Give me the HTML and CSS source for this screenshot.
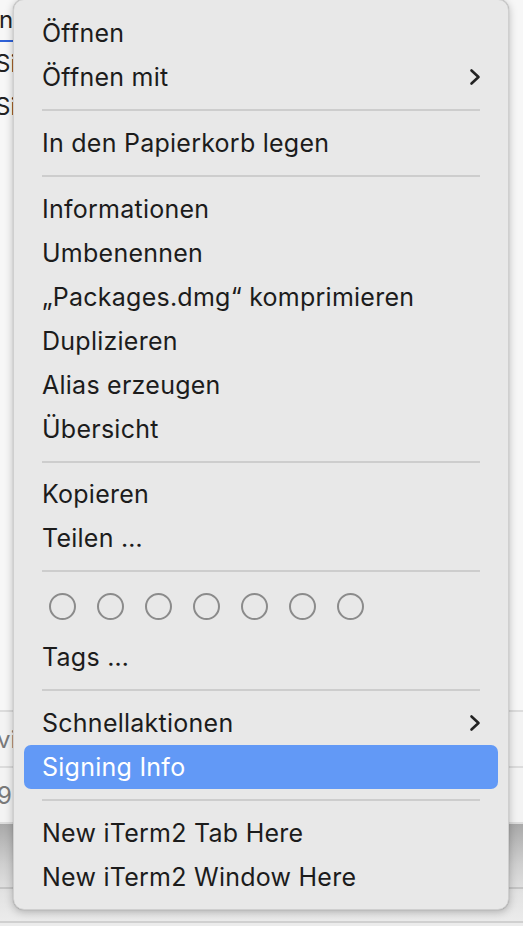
FILE: index.html
```html
<!DOCTYPE html>
<html lang="de">
<head>
<meta charset="utf-8">
<title>Kontextmenü</title>
<link rel="stylesheet" href="styles.css">
</head>
<body>
<div class="finder">
  <div class="frow first"><span class="ftext sel">n</span></div>
  <div class="frow plain"><span class="ftext">Si</span></div>
  <div class="frow plain"><span class="ftext">Si</span></div>
  <div class="fspacer"></div>
  <div class="frow lined"><span class="ftext gray">vi</span></div>
  <div class="frow lined"><span class="ftext gray">9</span></div>
  <div class="fgray">
    <div class="gline one"></div>
    <div class="gline two"></div>
  </div>
</div>

<div class="menu">
  <div class="item">Öffnen</div>
  <div class="item sub">Öffnen mit<svg class="chev" viewBox="0 0 12 18"><path d="M2.5 2.5 L9.5 9 L2.5 15.5" /></svg></div>
  <div class="sep"></div>
  <div class="item">In den Papierkorb legen</div>
  <div class="sep"></div>
  <div class="item">Informationen</div>
  <div class="item">Umbenennen</div>
  <div class="item">„Packages.dmg“ komprimieren</div>
  <div class="item">Duplizieren</div>
  <div class="item">Alias erzeugen</div>
  <div class="item">Übersicht</div>
  <div class="sep"></div>
  <div class="item">Kopieren</div>
  <div class="item">Teilen …</div>
  <div class="sep"></div>
  <div class="tags">
    <span class="dot"></span><span class="dot"></span><span class="dot"></span><span class="dot"></span><span class="dot"></span><span class="dot"></span><span class="dot"></span>
  </div>
  <div class="item">Tags …</div>
  <div class="sep"></div>
  <div class="item sub">Schnellaktionen<svg class="chev" viewBox="0 0 12 18"><path d="M2.5 2.5 L9.5 9 L2.5 15.5" /></svg></div>
  <div class="item active">Signing Info</div>
  <div class="sep"></div>
  <div class="item">New iTerm2 Tab Here</div>
  <div class="item">New iTerm2 Window Here</div>
</div>
</body>
</html>
```

FILE: styles.css
```css
html, body {
  margin: 0;
  padding: 0;
  width: 523px;
  height: 926px;
  overflow: hidden;
  font-family: Inter, "Noto Sans", "Liberation Sans", sans-serif;
}

body {
  position: relative;
  background: #f6f6f6;
}

.finder {
  display: flex;
  flex-direction: column;
  height: 926px;
  background: #f7f7f7;
}

.frow {
  display: flex;
  align-items: center;
  box-sizing: border-box;
}

.ftext {
  font-size: 24px;
  color: #222;
  margin-left: -5px;
}

.ftext.gray {
  color: #7a7a7a;
  margin-left: -3px;
}

.frow.first {
  height: 42px;
  align-items: stretch;
}

.ftext.sel {
  width: 30px;
  margin-left: -1px;
  display: flex;
  align-items: center;
  padding-bottom: 2px;
  border-bottom: 2px solid #2f62d8;
}

.frow.plain {
  height: 43px;
}

.fspacer {
  height: 584px;
  border-bottom: 2px solid #dcdcdc;
  box-sizing: border-box;
}

.frow.lined {
  height: 56px;
  border-bottom: 2px solid #dcdcdc;
  background: #f3f3f3;
}

.fgray {
  flex: 1;
  position: relative;
  background: linear-gradient(to bottom, #a9a9a9 0px, #cfcfcf 40px, #e3e3e3 70px, #ececec 100px);
}

.gline {
  position: absolute;
  left: 0;
  right: 0;
  height: 2px;
  background: #c4c4c4;
}

.gline.one { top: 63px; }
.gline.two { top: 97px; background: #d0d0d0; }

.menu {
  position: absolute;
  left: 13px;
  top: -1px;
  width: 496px;
  height: 911px;
  box-sizing: border-box;
  padding: 11px 10px 10px 10px;
  background: #e8e8e8;
  border: 1px solid #cfcfcf;
  border-radius: 11px;
  box-shadow: 0 2px 8px rgba(0, 0, 0, 0.25), 0 0 1px rgba(0, 0, 0, 0.3);
  display: flex;
  flex-direction: column;
}

.item {
  height: 44px;
  display: flex;
  align-items: center;
  justify-content: space-between;
  padding: 0 18px 0 18px;
  font-size: 25px;
  color: #1c1c1c;
  border-radius: 7px;
  letter-spacing: 0.25px;
}

.item.active {
  background: #6299f6;
  color: #ffffff;
}

.chev {
  width: 12px;
  height: 18px;
  margin-right: -1px;
}

.chev path {
  fill: none;
  stroke: #232323;
  stroke-width: 2.6;
  stroke-linecap: round;
  stroke-linejoin: round;
}

.sep {
  height: 22px;
  display: flex;
  align-items: center;
  padding: 0 18px;
}

.sep::before {
  content: "";
  display: block;
  width: 100%;
  height: 2px;
  background: #cdcdcd;
}

.tags {
  height: 53px;
  display: flex;
  align-items: center;
  gap: 21px;
  padding: 0 0 5px 25px;
  box-sizing: border-box;
}

.dot {
  width: 23px;
  height: 23px;
  border: 2px solid #8b8b8b;
  border-radius: 50%;
  flex: none;
}
```
